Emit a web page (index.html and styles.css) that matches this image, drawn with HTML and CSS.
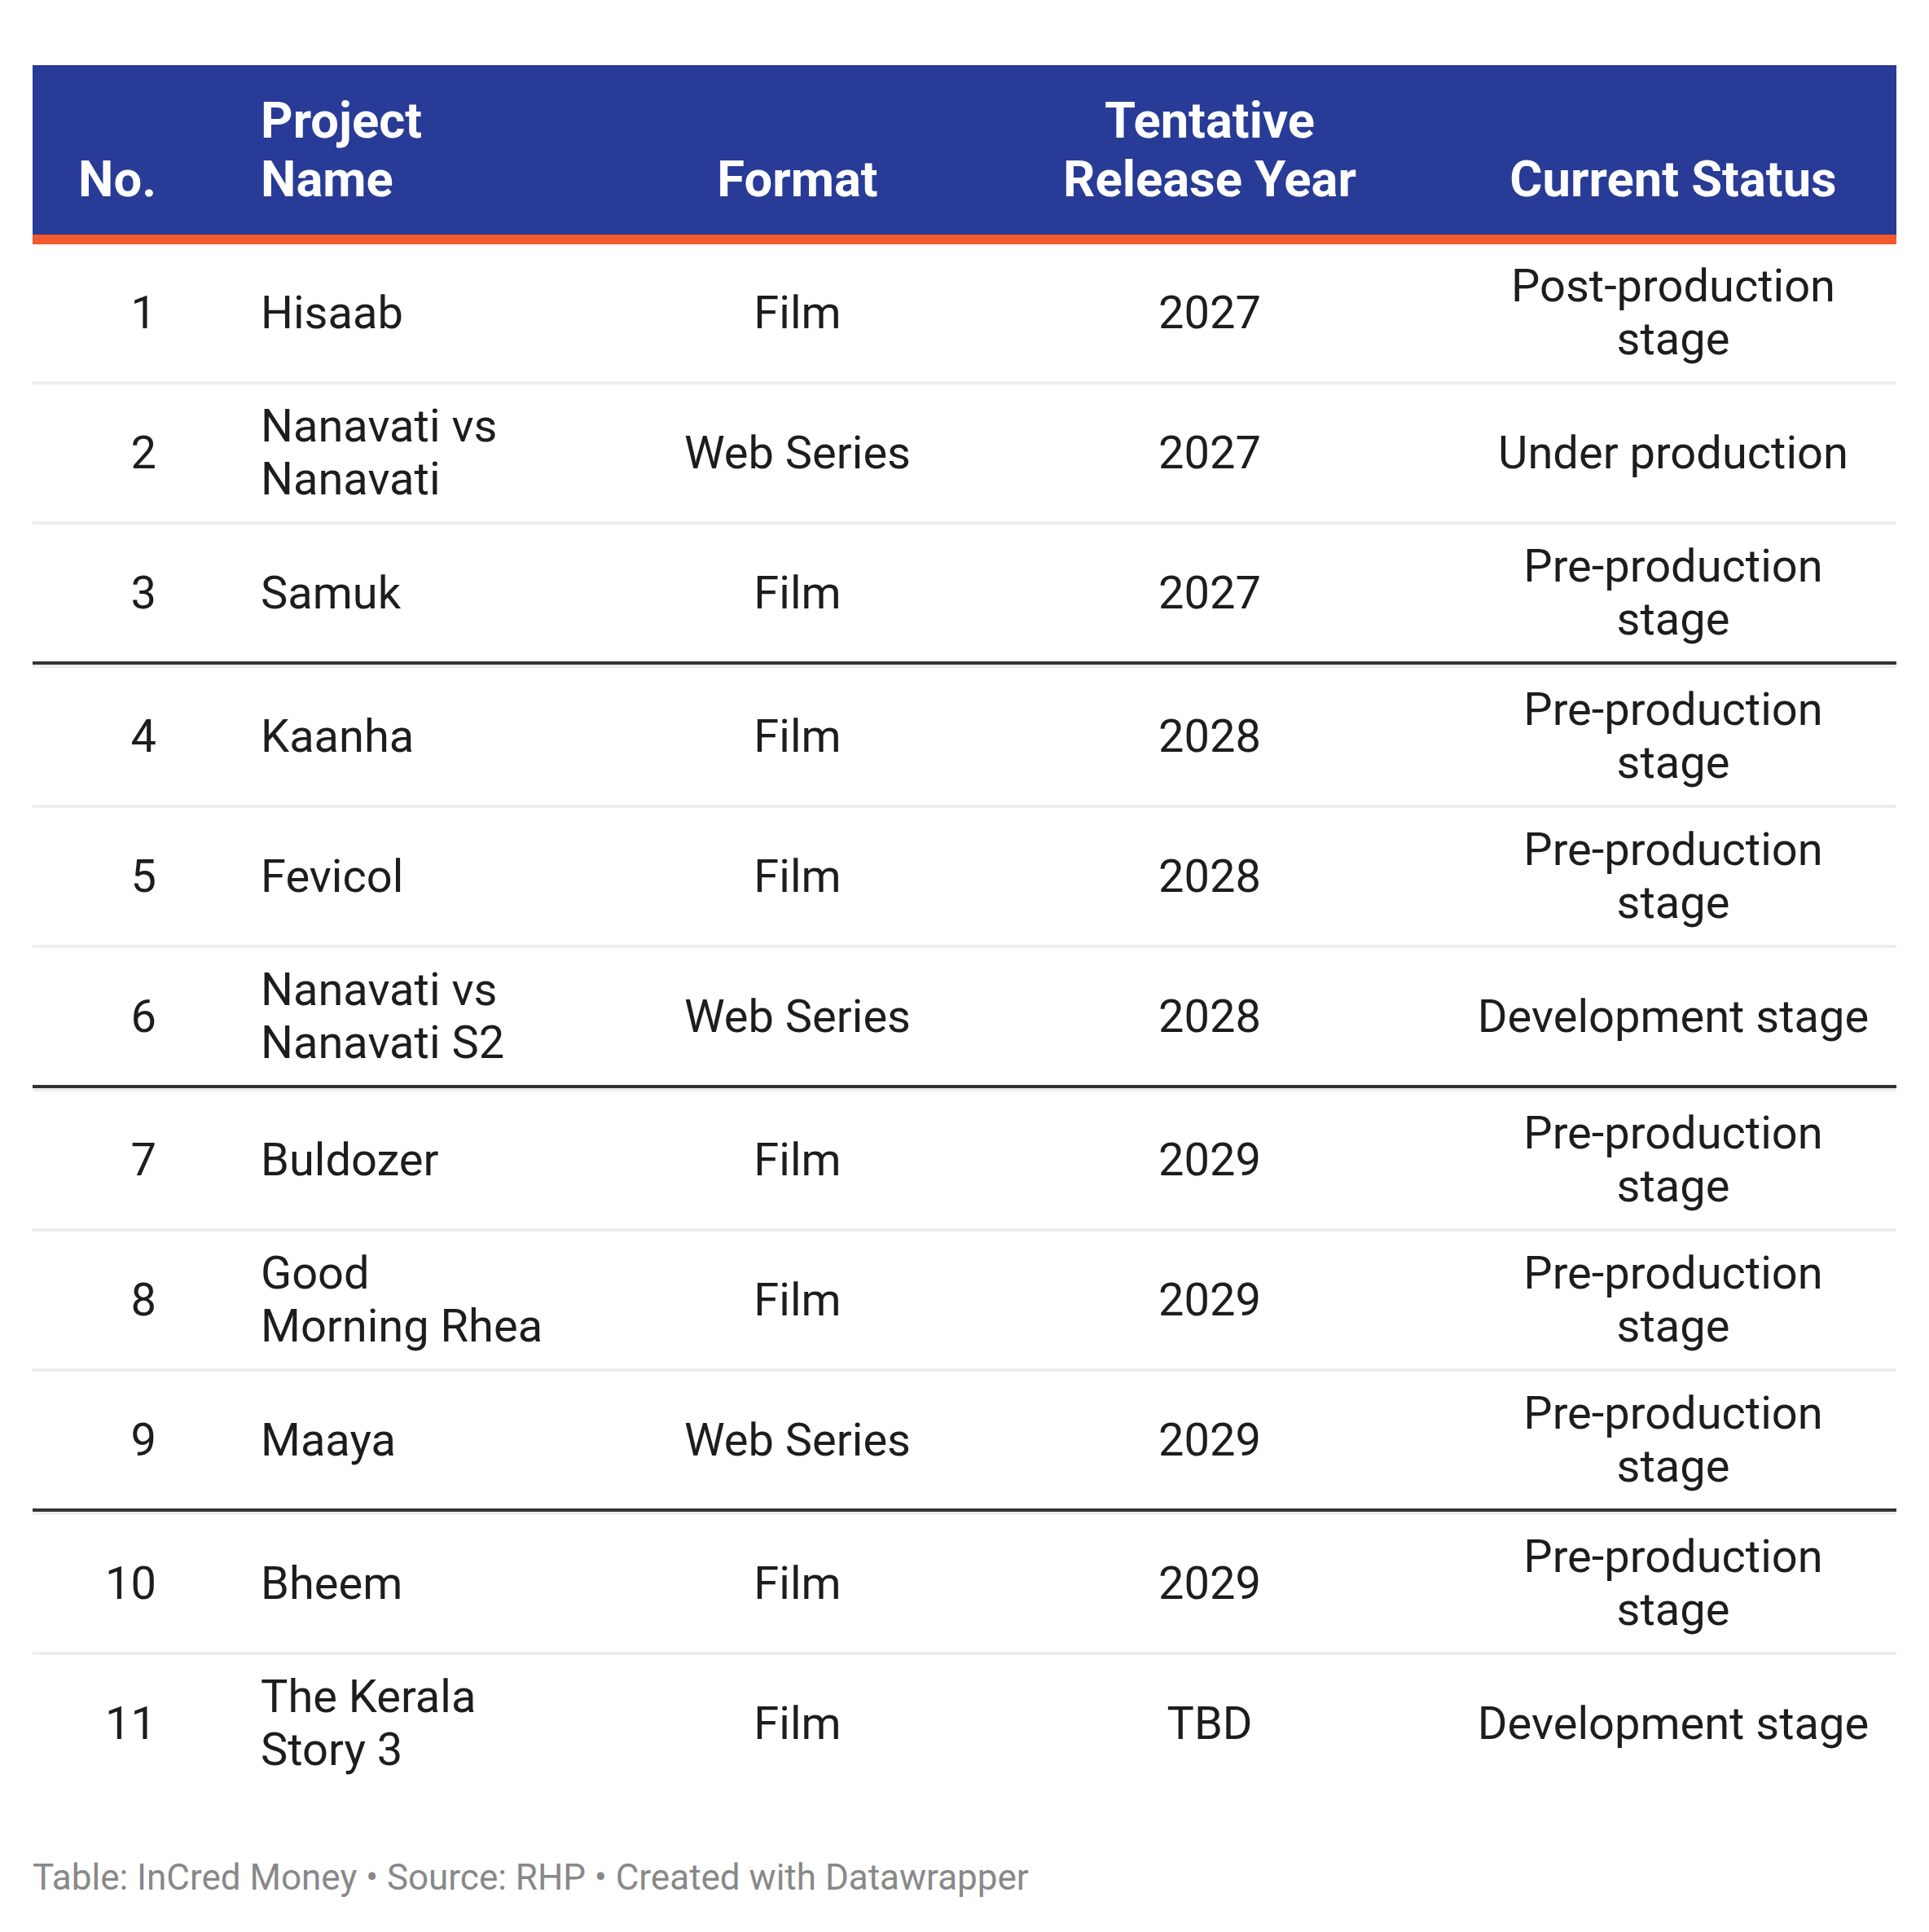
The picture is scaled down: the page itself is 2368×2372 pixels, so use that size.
FILE: index.html
```html
<!DOCTYPE html>
<html lang="en">
<head>
<meta charset="utf-8">
<title>Upcoming projects</title>
<link rel="stylesheet" href="styles.css">
</head>
<body>
<div class="chart">
  <div class="table">
    <div class="row head">
      <div class="cell c-no">No.</div>
      <div class="cell c-name">Project Name</div>
      <div class="cell c-center">Format</div>
      <div class="cell c-year">Tentative Release Year</div>
      <div class="cell c-status">Current Status</div>
    </div>
    <div class="row first">
      <div class="cell c-no">1</div>
      <div class="cell c-name">Hisaab</div>
      <div class="cell c-center">Film</div>
      <div class="cell c-year">2027</div>
      <div class="cell c-status">Post-production stage</div>
    </div>
    <div class="row">
      <div class="cell c-no">2</div>
      <div class="cell c-name">Nanavati vs Nanavati</div>
      <div class="cell c-center">Web Series</div>
      <div class="cell c-year">2027</div>
      <div class="cell c-status">Under production</div>
    </div>
    <div class="row group-end">
      <div class="cell c-no">3</div>
      <div class="cell c-name">Samuk</div>
      <div class="cell c-center">Film</div>
      <div class="cell c-year">2027</div>
      <div class="cell c-status">Pre-production stage</div>
    </div>
    <div class="row">
      <div class="cell c-no">4</div>
      <div class="cell c-name">Kaanha</div>
      <div class="cell c-center">Film</div>
      <div class="cell c-year">2028</div>
      <div class="cell c-status">Pre-production stage</div>
    </div>
    <div class="row">
      <div class="cell c-no">5</div>
      <div class="cell c-name">Fevicol</div>
      <div class="cell c-center">Film</div>
      <div class="cell c-year">2028</div>
      <div class="cell c-status">Pre-production stage</div>
    </div>
    <div class="row group-end">
      <div class="cell c-no">6</div>
      <div class="cell c-name">Nanavati vs Nanavati S2</div>
      <div class="cell c-center">Web Series</div>
      <div class="cell c-year">2028</div>
      <div class="cell c-status">Development stage</div>
    </div>
    <div class="row">
      <div class="cell c-no">7</div>
      <div class="cell c-name">Buldozer</div>
      <div class="cell c-center">Film</div>
      <div class="cell c-year">2029</div>
      <div class="cell c-status">Pre-production stage</div>
    </div>
    <div class="row">
      <div class="cell c-no">8</div>
      <div class="cell c-name">Good Morning Rhea</div>
      <div class="cell c-center">Film</div>
      <div class="cell c-year">2029</div>
      <div class="cell c-status">Pre-production stage</div>
    </div>
    <div class="row group-end">
      <div class="cell c-no">9</div>
      <div class="cell c-name">Maaya</div>
      <div class="cell c-center">Web Series</div>
      <div class="cell c-year">2029</div>
      <div class="cell c-status">Pre-production stage</div>
    </div>
    <div class="row">
      <div class="cell c-no">10</div>
      <div class="cell c-name">Bheem</div>
      <div class="cell c-center">Film</div>
      <div class="cell c-year">2029</div>
      <div class="cell c-status">Pre-production stage</div>
    </div>
    <div class="row">
      <div class="cell c-no">11</div>
      <div class="cell c-name">The Kerala Story 3</div>
      <div class="cell c-center">Film</div>
      <div class="cell c-year">TBD</div>
      <div class="cell c-status">Development stage</div>
    </div>
  </div>
  <div class="footer">Table: InCred Money • Source: RHP • Created with Datawrapper</div>
</div>
</body>
</html>
```
FILE: styles.css
```css
html, body {
  margin: 0;
  padding: 0;
  background: #ffffff;
}

body {
  font-family: Roboto, "Liberation Sans", Arial, sans-serif;
  color: #1d1d1d;
}

.chart {
  padding: 80px 40px 0 40px;
}

.table {
  width: 2288px;
}

.row {
  display: grid;
  grid-template-columns: 192px 540px 414px 598px 544px;
  align-items: center;
  font-size: 56px;
  line-height: 65px;
  border-top: 4px solid #eeeeee;
}

.row.first {
  border-top: none;
}

.row.group-end {
  border-bottom: 4px solid #333333;
}

.row.head {
  background: #283b96;
  color: #ffffff;
  font-weight: 700;
  font-size: 61.5px;
  line-height: 72px;
  align-items: end;
  border-top: none;
  border-bottom: 12px solid #f05a2c;
}

.cell {
  padding: 19px 16px;
}

.head .cell {
  padding-top: 32px;
  padding-bottom: 32px;
}

.c-no {
  text-align: right;
  padding-left: 0;
  padding-right: 40px;
}

.c-name {
  text-align: left;
  padding-left: 88px;
  padding-right: 102px;
}

.c-center {
  text-align: center;
}

.c-year {
  text-align: center;
  padding-left: 90px;
  padding-right: 90px;
}

.c-status {
  text-align: center;
  padding-left: 14px;
  padding-right: 18px;
}

.footer {
  margin-top: 79px;
  font-size: 44px;
  line-height: 52px;
  color: #888888;
}
```
